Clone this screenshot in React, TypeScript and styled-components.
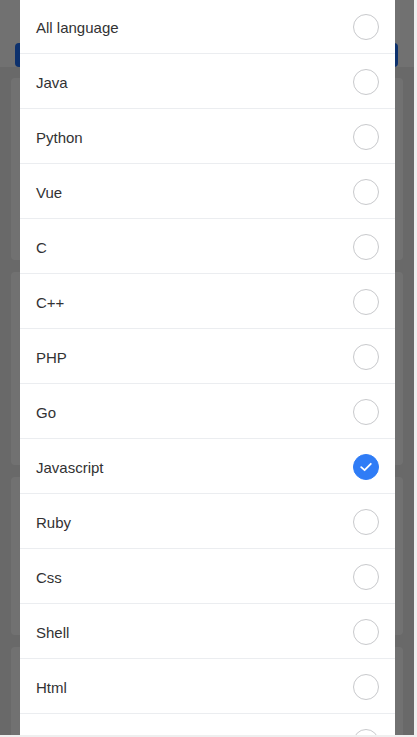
import React from "react";
import styled, { createGlobalStyle } from "styled-components";

const Global = createGlobalStyle`
  html, body { margin: 0; padding: 0; background: #efefef; }
  body { font-family: "Liberation Sans", Arial, sans-serif; overflow: hidden; }
  * { box-sizing: border-box; }
`;

const Page = styled.div`
  width: 414px;
  height: 735px;
  background: #ececec;
  overflow: hidden;
  display: flex;
  flex-direction: column;
`;

const Header = styled.div`
  height: 78px;
  background: #fff;
  padding: 43px 16px 0 15px;
`;

const BlueBar = styled.div`
  height: 24px;
  background: #1e6ff5;
  border-radius: 4px;
`;

const Cards = styled.div`
  display: flex;
  flex-direction: column;
  gap: 12px;
  padding: 11px 11px 0 11px;
`;

const Card = styled.div<{ $h: number }>`
  height: ${(p) => p.$h}px;
  background: #fff;
  border-radius: 4px;
  flex-shrink: 0;
`;

const Overlay = styled.div`
  position: fixed;
  top: 0;
  left: 0;
  width: 414px;
  height: 735px;
  background: rgba(0, 0, 0, 0.555);
  display: flex;
  padding-left: 20px;
  overflow: hidden;
`;

const Modal = styled.div`
  width: 375px;
  height: 736px;
  margin-top: -1px;
  background: #fff;
  overflow: hidden;
  flex-shrink: 0;
`;

const Row = styled.div`
  height: 55px;
  display: flex;
  align-items: center;
  justify-content: space-between;
  padding: 0 16px;
  border-bottom: 1px solid #ebedf0;
`;

const Label = styled.span`
  font-size: 15px;
  color: #323233;
  padding-top: 3px;
`;

const Radio = styled.span<{ $on: boolean }>`
  width: 26px;
  height: 26px;
  border-radius: 50%;
  border: 1px solid ${(p) => (p.$on ? "#2f7cf6" : "#c8c9cc")};
  background: ${(p) => (p.$on ? "#2f7cf6" : "#fff")};
  display: flex;
  align-items: center;
  justify-content: center;
  margin-top: 1px;
`;

const langs = [
  "All language",
  "Java",
  "Python",
  "Vue",
  "C",
  "C++",
  "PHP",
  "Go",
  "Javascript",
  "Ruby",
  "Css",
  "Shell",
  "Html",
  "",
];

export default function App() {
  const selected = "Javascript";
  return (
    <>
      <Global />
      <Page>
        <Header>
          <BlueBar />
        </Header>
        <Cards>
          <Card $h={182} />
          <Card $h={193} />
          <Card $h={158} />
          <Card $h={120} />
        </Cards>
      </Page>
      <Overlay>
        <Modal>
          {langs.map((l, i) => (
            <Row key={i}>
              <Label>{l}</Label>
              <Radio $on={l === selected}>
                {l === selected && (
                  <svg width="14" height="14" viewBox="0 0 14 14">
                    <path
                      d="M2.2 7.2 L5.6 10.2 L11.8 3.8"
                      fill="none"
                      stroke="#fff"
                      strokeWidth="1.8"
                      strokeLinecap="round"
                      strokeLinejoin="round"
                    />
                  </svg>
                )}
              </Radio>
            </Row>
          ))}
        </Modal>
      </Overlay>
    </>
  );
}
